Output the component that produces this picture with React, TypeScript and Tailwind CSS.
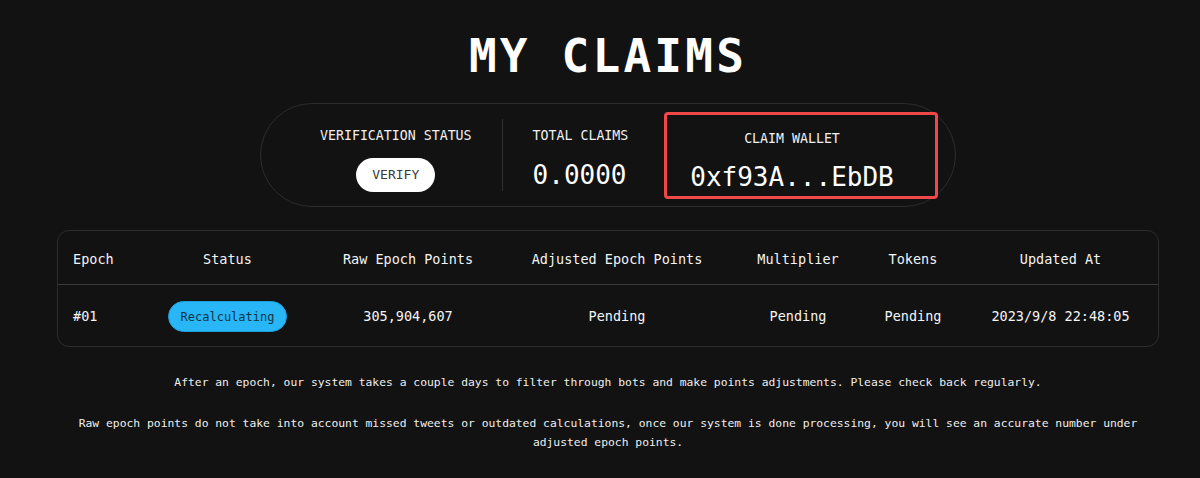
const mono = "font-['DejaVu_Sans_Mono','Liberation_Mono',monospace]";

const columns = [
  { label: 'Epoch', align: 'justify-start pl-[15px]' },
  { label: 'Status', align: 'justify-center' },
  { label: 'Raw Epoch Points', align: 'justify-center' },
  { label: 'Adjusted Epoch Points', align: 'justify-center' },
  { label: 'Multiplier', align: 'justify-center' },
  { label: 'Tokens', align: 'justify-center' },
  { label: 'Updated At', align: 'justify-center' },
];

const grid = 'grid grid-cols-[82px_175px_186px_232px_130px_100px_195px]';

function StatusBadge({ text }: { text: string }) {
  return (
    <span className="flex h-[31px] w-[119px] shrink-0 items-center justify-center rounded-full border border-[#1e9fd8] bg-[#29b6f6] text-[12px] text-[#0d3446]">
      {text}
    </span>
  );
}

export default function App() {
  const row = ['#01', null, '305,904,607', 'Pending', 'Pending', 'Pending', '2023/9/8 22:48:05'];

  return (
    <div className={`min-h-[478px] w-full bg-[#121212] pl-[16px] text-[#f4f4f4] ${mono}`}>
      <div className="flex flex-col items-center pt-[31px]">
        <h1 className="text-[46px] leading-[50px] font-bold tracking-[0.07em] text-white">MY CLAIMS</h1>

        {/* stats pill */}
        <div className="mt-[22px] flex h-[104px] w-[696px] items-center rounded-full border border-[#2c2c2c] pl-[59px]">
          <div className="mt-[24px] flex flex-col items-center self-start">
            <span className="text-[13.25px] leading-[16px] text-[#f0f0f0]">VERIFICATION STATUS</span>
            <button className="mt-[14px] h-[34px] w-[79px] rounded-full bg-white text-[13px] text-[#3a3a3a]">VERIFY</button>
          </div>
          <div className="mx-[30px] h-[72px] w-px bg-[#2e2e2e]" />
          <div className="mt-[24px] flex flex-col items-start self-start">
            <span className="text-[13.25px] leading-[16px] text-[#f0f0f0]">TOTAL CLAIMS</span>
            <span className="mt-[15px] text-[26px] leading-[32px] text-white">0.0000</span>
          </div>
          <div className="ml-auto mr-[17px] flex h-[87px] w-[274px] flex-col items-center rounded-[4px] border-[3px] border-[#ef4846] pt-[16px] pr-[18px]">
            <span className="text-[13.25px] leading-[16px] text-[#f0f0f0]">CLAIM WALLET</span>
            <span className="mt-[14px] text-[26px] leading-[32px] text-white">0xf93A...EbDB</span>
          </div>
        </div>

        {/* table */}
        <div className="mt-[23px] w-[1102px] rounded-xl border border-[#2c2c2c]">
          <div className={`${grid} h-[54px] border-b border-[#3a3a3a] pt-[3px] text-[13.5px]`}>
            {columns.map((c) => (
              <div key={c.label} className={`flex items-center ${c.align}`}>
                {c.label}
              </div>
            ))}
          </div>
          <div className={`${grid} h-[61px] pt-[2px] text-[13.5px]`}>
            {row.map((v, i) => (
              <div key={i} className={`flex items-center ${columns[i].align}`}>
                {v === null ? <StatusBadge text="Recalculating" /> : v}
              </div>
            ))}
          </div>
        </div>

        {/* notes */}
        <div className="mt-[26px] w-[1100px] text-center text-[11.35px] leading-[19px] text-[#eeeeee]">
          <p>After an epoch, our system takes a couple days to filter through bots and make points adjustments. Please check back regularly.</p>
          <p className="mt-[22px] px-[10px]">
            Raw epoch points do not take into account missed tweets or outdated calculations, once our system is done processing, you will see an accurate number under adjusted epoch points.
          </p>
        </div>
      </div>
    </div>
  );
}
